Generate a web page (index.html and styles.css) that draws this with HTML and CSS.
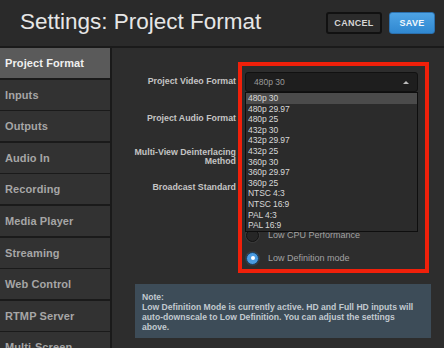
FILE: index.html
```html
<!DOCTYPE html>
<html lang="en">
<head>
    <meta charset="UTF-8">
    <meta name="viewport" content="width=device-width, initial-scale=1.0">
    <title>Settings: Project Format</title>
    <link rel="stylesheet" href="styles.css">
</head>
<body>
    <div class="settings-window">
        <div class="settings-header">
            <h1 class="settings-title">Settings: Project Format</h1>
            <div class="header-actions">
                <button class="btn btn-cancel">CANCEL</button>
                <button class="btn btn-save">SAVE</button>
            </div>
        </div>

        <div class="settings-main">
            <ul class="side-nav">
                <li class="nav-item active">Project Format</li>
                <li class="nav-item">Inputs</li>
                <li class="nav-item">Outputs</li>
                <li class="nav-item">Audio In</li>
                <li class="nav-item">Recording</li>
                <li class="nav-item">Media Player</li>
                <li class="nav-item">Streaming</li>
                <li class="nav-item">Web Control</li>
                <li class="nav-item">RTMP Server</li>
                <li class="nav-item">Multi-Screen</li>
            </ul>

            <div class="settings-content">
                <div class="form-grid">
                    <div class="form-label">Project Video Format</div>
                    <div class="select-box open">
                        <span>480p 30</span>
                        <span class="select-arrow"></span>
                    </div>

                    <!-- these selects sit under the open list -->
                    <div class="form-label">Project Audio Format</div>
                    <div class="select-box"></div>

                    <div class="form-label">Multi-View Deinterlacing<br>Method</div>
                    <div class="select-box"></div>

                    <div class="form-label">Broadcast Standard</div>
                    <div class="select-box"></div>

                    <div class="form-label"></div>
                    <label class="radio-option">
                        <span class="radio"></span>
                        Low CPU Performance
                    </label>

                    <div class="form-label"></div>
                    <label class="radio-option">
                        <span class="radio checked"></span>
                        Low Definition mode
                    </label>
                </div>

                <div class="note-box">
                    Note:<br>
                    Low Definition Mode is currently active. HD and Full HD inputs will<br>
                    auto-downscale to Low Definition. You can adjust the settings<br>
                    above.
                </div>

                <!-- open dropdown list of the video format select -->
                <ul class="dropdown-list">
                    <li class="selected">480p 30</li>
                    <li>480p 29.97</li>
                    <li>480p 25</li>
                    <li>432p 30</li>
                    <li>432p 29.97</li>
                    <li>432p 25</li>
                    <li>360p 30</li>
                    <li>360p 29.97</li>
                    <li>360p 25</li>
                    <li>NTSC 4:3</li>
                    <li>NTSC 16:9</li>
                    <li>PAL 4:3</li>
                    <li>PAL 16:9</li>
                </ul>

                <!-- red highlight frame -->
                <div class="highlight-frame"></div>
            </div>
        </div>
    </div>
</body>
</html>
```

FILE: styles.css
```css
body {
    margin: 0;
    font-family: 'Liberation Sans', Arial, sans-serif;
    background-color: #2d2d2d;
    overflow: hidden;
}
.settings-window {
    width: 444px;
    height: 348px;
    display: flex;
    flex-direction: column;
}
.settings-header {
    height: 46px;
    flex-shrink: 0;
    background-color: #2a2a2a;
    border-bottom: 2px solid #1a1a1a;
    display: flex;
    align-items: center;
    justify-content: space-between;
}
.settings-title {
    margin: 0 0 2px 20px;
    font-size: 22.5px;
    font-weight: normal;
    color: #e6e6e6;
}
.header-actions {
    display: flex;
    gap: 7px;
    margin-right: 9px;
    margin-bottom: 1px;
}
.btn {
    height: 22px;
    font-family: 'Liberation Sans', Arial, sans-serif;
    font-size: 9px;
    font-weight: bold;
    letter-spacing: 0.3px;
    border-radius: 3px;
    padding: 0;
    cursor: pointer;
}
.btn-cancel {
    width: 56px;
    background-color: #2b2b2b;
    border: 2px solid #111;
    color: #d6d6d6;
}
.btn-save {
    width: 46px;
    background: linear-gradient(#4ea3e4, #3088d1);
    border: 1px solid #2b70ad;
    color: #f4f8fc;
}
.settings-main {
    flex: 1;
    display: flex;
    min-height: 0;
}
.side-nav {
    list-style: none;
    margin: 0;
    padding: 0;
    width: 110px;
    flex-shrink: 0;
    background-color: #1a1a1a;
    border-right: 2px solid #1a1a1a;
}
.nav-item {
    height: 30px;
    margin-bottom: 1.6px;
    padding-left: 5px;
    display: flex;
    align-items: center;
    background-color: #323232;
    color: #a6a6a6;
    font-size: 11px;
    font-weight: bold;
    letter-spacing: 0.1px;
}
.nav-item.active {
    background-color: #5a5a5a;
    color: #f0f0f0;
}
.settings-content {
    flex: 1;
    position: relative;
    padding: 24px 0 0 20px;
    background-color: #2d2d2d;
}
.form-grid {
    display: grid;
    grid-template-columns: 104px 173px;
    grid-template-rows: 37px 38px 31px 47px 23px 23px;
    column-gap: 9px;
    align-items: start;
}
.form-label {
    height: 20px;
    display: flex;
    align-items: center;
    justify-content: flex-end;
    text-align: right;
    color: #c4c4c4;
    font-size: 8.8px;
    font-weight: bold;
    line-height: 9.5px;
    white-space: nowrap;
}
.select-box {
    height: 20px;
    box-sizing: border-box;
    background-color: #1e1e1e;
    border: 1px solid #111;
    border-radius: 3px;
    display: flex;
    align-items: center;
    justify-content: space-between;
    padding: 0 8px;
    color: #9a9a9a;
    font-size: 8.5px;
}
.select-arrow {
    width: 0;
    height: 0;
    border-left: 3px solid transparent;
    border-right: 3px solid transparent;
    border-bottom: 3px solid #bcbcbc;
}
.radio-option {
    height: 20px;
    display: flex;
    align-items: center;
    gap: 9px;
    margin-left: 1px;
    color: #a2a2a2;
    font-size: 9px;
}
.radio {
    width: 11px;
    height: 11px;
    border-radius: 50%;
    background-color: #262626;
    border: 1px solid #121212;
    box-shadow: 0 0 0 1px #3a3a3a;
    display: flex;
    align-items: center;
    justify-content: center;
}
.radio.checked {
    background-color: #4a9be0;
    border-color: #1a3f60;
}
.radio.checked::after {
    content: '';
    width: 4px;
    height: 4px;
    border-radius: 50%;
    background-color: #fff;
}
.note-box {
    width: 296px;
    box-sizing: border-box;
    margin: 13px 0 0 3px;
    padding: 8px 7px 6px;
    background-color: #3d4c58;
    color: #c2cad0;
    font-size: 8.6px;
    font-weight: bold;
    line-height: 10px;
    white-space: nowrap;
}
.dropdown-list {
    list-style: none;
    margin: 0;
    padding: 0;
    position: absolute;
    left: 133px;
    top: 44px;
    width: 173px;
    box-sizing: border-box;
    background-color: #2b2b2b;
    border: 1px solid #0e0e0e;
}
.dropdown-list li {
    height: 10.6px;
    line-height: 10.6px;
    padding-left: 2px;
    color: #d8d8d8;
    font-size: 8.5px;
    letter-spacing: -0.1px;
}
.dropdown-list li.selected {
    background-color: #4b4b4b;
}
.highlight-frame {
    position: absolute;
    left: 126px;
    top: 14px;
    width: 191px;
    height: 211px;
    box-sizing: border-box;
    border: 4px solid #f0200a;
    pointer-events: none;
}
```
